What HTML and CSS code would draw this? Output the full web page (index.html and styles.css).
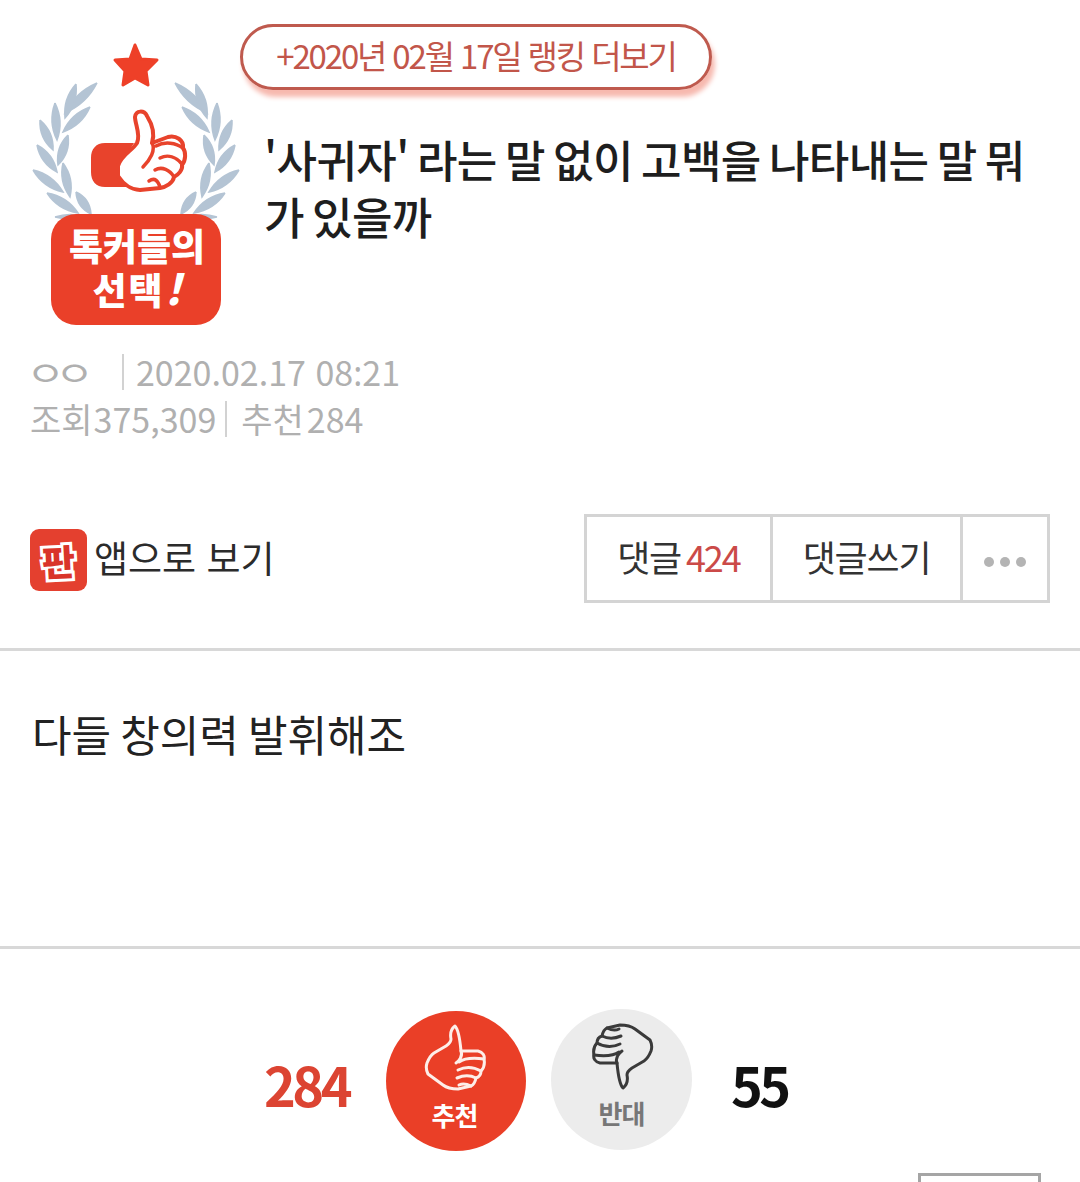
FILE: index.html
```html
<!DOCTYPE html>
<html lang="ko">
<head>
<meta charset="utf-8">
<title>사귀자</title>
<link rel="stylesheet" href="styles.css">
</head>
<body>
<main class="page">
  <header class="head">
    <svg class="emblem" viewBox="0 0 240 340" width="240" height="340" aria-hidden="true">
      <defs>
        <g id="wreath">
          <path d="M97 83Q75.5 92.2 65 113Q86.5 103.8 97 83"/>
          <path d="M76 84Q63 98.5 65 118Q78 103.5 76 84"/>
          <path d="M90 107Q71 113.7 63 132Q82 125.3 90 107"/>
          <path d="M55 103Q48 122 57 140Q64 121 55 103"/>
          <path d="M40 120Q39 138 53 150Q54 132 40 120"/>
          <path d="M68 135Q55.4 147.4 58 165Q70.6 152.6 68 135"/>
          <path d="M37 145Q40.6 163.3 57 172Q53.4 153.7 37 145"/>
          <path d="M33 170Q43.3 187.5 63 192Q52.7 174.5 33 170"/>
          <path d="M63 163Q58.7 181.6 70 197Q74.3 178.4 63 163"/>
          <path d="M47 193Q58 209.7 78 213Q67 196.3 47 193"/>
          <path d="M76 192Q76.9 207.5 91 214Q90 198.5 76 192"/>
          <path d="M55 217Q70 212 85 217Q70 221 55 217"/>
        </g>
      </defs>
      <use href="#wreath" class="leaf"/>
      <use href="#wreath" class="leaf" transform="matrix(-1 0 0 1 272 0)"/>
      <polygon class="star" points="135,45 141,59 157,60 146,71 148,85 135,78 123,85 125,71 115,60 130,59"/>
      <path class="cuff" d="M126 143H105C96 143 91 149 91 158V172C91 181 96 187 105 187H128L118 168L134 143Z"/>
      <path class="hand" d="M118 166C121 155 132 151 137 143C141 135 135 124 135 117C136 110 144 110 147 116C152 124 155 134 152 143L168 137C176 135 184 140 183 148C186 152 186 160 182 165C183 170 178 175 174 177C173 183 166 187 160 188L140 190C130 190 122 182 118 176Z"/>
      <path class="hand-line" d="M152 143C156 150 150 160 143 167M156 146C165 141 176 143 183 148M160 158C168 154 176 157 182 164M155 170C162 166 170 170 174 177M149 181C155 177 158 181 160 187"/>
      <rect class="badge" x="51" y="214" width="170" height="111" rx="25"/>
      <text class="badge-text" x="137" y="261">톡커들의</text>
      <text class="badge-text badge-second" x="138" y="305">선택<tspan class="bang">!</tspan></text>
    </svg>
    <div class="head-main">
      <a class="rank"><span class="rank-label">+2020년 02월 17일 랭킹 더보기</span></a>
      <h1 class="title">'사귀자' 라는 말 없이 고백을 나타내는 말 뭐가 있을까</h1>
    </div>
  </header>

  <section class="meta">
    <p class="meta-line"><span class="author"><span class="author-name">ㅇㅇ</span></span><i class="sep sep-a"></i><span>2020.02.17 08<span class="colon">:</span>21</span></p>
    <p class="meta-line meta-second"><span>조회</span><span class="num">375,309</span><i class="sep"></i><span>추천</span><span class="num">284</span></p>
  </section>

  <section class="actions">
    <a class="app">
      <span class="app-icon"><span class="app-glyph">판</span></span>
      <span class="app-label">앱으로 보기</span>
    </a>
    <div class="tabs">
      <a class="tab tab-reply">댓글 <b class="count">424</b></a>
      <a class="tab tab-write">댓글쓰기</a>
      <a class="tab tab-more"><i></i><i></i><i></i></a>
    </div>
  </section>

  <article class="body-text">다들 창의력 발휘해조</article>

  <section class="vote">
    <strong class="vote-num up-num">284</strong>
    <a class="circle circle-up">
      <svg class="thumb" viewBox="-2 -2 64 68" width="64" height="68" aria-hidden="true">
        <path d="M29 0C32 3 34 14 35 25L52 25C57 26 59 30 58 33C59 38 58 42 55 45C55 49 53 51 50 52C49 57 47 59 45 60L32 63C26 63 21 62 17 59L2 48C0 44 0 40 1 37C3 32 5 29 8 27L20 20C23 18 25 15 25 13C24 8 25 3 29 0Z"/>
        <path d="M35 25C37 30 33 35 30 37M33 36C40 31 50 32 58 33M32 44C40 40 48 41 55 45M31 52C38 49 44 49 50 52M33 59C37 57 41 58 45 60"/>
      </svg>
      <span class="circle-label">추천</span>
    </a>
    <a class="circle circle-down">
      <svg class="thumb thumb-down" viewBox="-2 -2 64 68" width="64" height="68" aria-hidden="true">
        <path d="M29 0C32 3 34 14 35 25L52 25C57 26 59 30 58 33C59 38 58 42 55 45C55 49 53 51 50 52C49 57 47 59 45 60L32 63C26 63 21 62 17 59L2 48C0 44 0 40 1 37C3 32 5 29 8 27L20 20C23 18 25 15 25 13C24 8 25 3 29 0Z"/>
        <path d="M35 25C37 30 33 35 30 37M33 36C40 31 50 32 58 33M32 44C40 40 48 41 55 45M31 52C38 49 44 49 50 52M33 59C37 57 41 58 45 60"/>
      </svg>
      <span class="circle-label">반대</span>
    </a>
    <strong class="vote-num down-num">55</strong>
  </section>
  <div class="peek-row"><div class="peek"></div></div>
</main>
</body>
</html>
```

FILE: styles.css
```css
* { box-sizing: border-box; }
html, body { margin: 0; padding: 0; background: #fff; }
body {
  width: 1080px;
  height: 1182px;
  overflow: hidden;
  font-family: "Noto Sans CJK KR", "Noto Sans", sans-serif;
  color: #222;
}
.page { display: flex; flex-direction: column; height: 1182px; overflow: hidden; }
a { color: inherit; text-decoration: none; }
p, h1 { margin: 0; }

.head { display: flex; height: 340px; flex: none; }
.emblem { flex: none; display: block; }
.leaf { fill: #b4c4d4; stroke: #b4c4d4; stroke-width: 1.5; }
.star { fill: #ee4028; stroke: #ee4028; stroke-width: 3; stroke-linejoin: round; }
.cuff { fill: #e8432c; }
.hand { fill: #fff; stroke: #e8432c; stroke-width: 4; stroke-linejoin: round; }
.hand-line { fill: none; stroke: #e8432c; stroke-width: 3.5; stroke-linecap: round; }
.badge { fill: #ea4029; }
.badge-text {
  fill: #fff;
  font-size: 37px;
  font-weight: 900;
  text-anchor: middle;
}
.badge-second { letter-spacing: 2px; }
.bang { font-style: italic; font-size: 42px; }

.head-main { flex: 1; display: flex; flex-direction: column; align-items: flex-start; padding-top: 24px; }
.rank {
  width: 472px;
  height: 66px;
  display: flex;
  align-items: center;
  justify-content: center;
  border: 3px solid #bf5a4e;
  border-radius: 33px;
  box-shadow: 3px 7px 5px #f7b9af;
  color: #c2564a;
  font-size: 33px;
  letter-spacing: -2.15px;
  white-space: nowrap;
}
.rank-label { margin-top: -4px; }
.title {
  margin: 41px 50px 0 24px;
  font-size: 44px;
  line-height: 57px;
  font-weight: 500;
  letter-spacing: -0.6px;
  word-spacing: -3.5px;
  color: #1e1e1e;
}

.meta {
  height: 114px;
  flex: none;
  padding: 8px 0 0 30px;
  color: #b0b0b0;
  font-size: 34px;
}
.meta-line { display: flex; align-items: center; height: 48px; line-height: 48px; white-space: nowrap; }
.meta-second { margin-top: -1px; }
.colon { font-family: "Noto Sans", sans-serif; }
.author { width: 92px; }
.author-name {
  display: inline-block;
  margin-left: -4px;
  letter-spacing: -8px;
  transform: scaleX(1.25);
  transform-origin: left center;
}
.sep { display: block; width: 2px; height: 36px; background: #d2d2d2; margin: 0 12px; }
.sep-a { margin-left: 0; }
.meta-second .sep { margin: 0 14px 0 9px; }
.num { margin-left: 1px; }
.sep + span + .num { margin-left: 3px; }

.actions {
  flex: none;
  height: 197px;
  padding: 60px 30px 0;
  display: flex;
  justify-content: space-between;
  align-items: flex-start;
  border-bottom: 3px solid #d8d8d8;
}
.app { display: flex; align-items: center; gap: 7px; margin-top: 15px; height: 62px; font-size: 37px; color: #2b2b2b; }
.app-label { margin-top: -6px; }
.app-icon {
  width: 57px;
  height: 62px;
  border-radius: 9px;
  background: #e4402f;
  display: flex;
  align-items: center;
  justify-content: center;
}
.app-glyph {
  font-size: 36px;
  font-weight: 900;
  color: #d9342a;
  -webkit-text-stroke: 6px #fff;
  paint-order: stroke fill;
  transform: rotate(-3deg);
  line-height: 1;
}
.tabs { display: flex; height: 89px; border: 3px solid #d4d4d4; }
.tab {
  display: flex;
  align-items: center;
  justify-content: center;
  padding-bottom: 6px;
  font-size: 36px;
  color: #333;
  letter-spacing: -1.2px;
  word-spacing: -4px;
  white-space: pre;
}
.tab-reply { width: 186px; border-right: 3px solid #d4d4d4; }
.tab-write { width: 190px; border-right: 3px solid #d4d4d4; }
.tab-more { width: 84px; gap: 6px; padding: 6px 0 0; }
.tab-more i { width: 10px; height: 10px; border-radius: 50%; background: #b4b4b4; }
.count { color: #cb4a48; font-weight: 400; letter-spacing: -2px; }

.body-text {
  flex: none;
  height: 298px;
  padding: 51px 0 0 32px;
  font-size: 43px;
  line-height: 62px;
  word-spacing: -3px;
  color: #222;
  border-bottom: 3px solid #d8d8d8;
}

.vote {
  flex: none;
  height: 222px;
  padding: 62px 0 0 264px;
  display: flex;
  align-items: flex-start;
}
.vote-num { font-size: 54px; line-height: 146px; font-weight: 700; letter-spacing: -3.5px; }
.up-num { color: #dc4432; width: 122px; }
.down-num { color: #111; margin-left: 39px; }
.circle {
  flex: none;
  width: 141px;
  height: 141px;
  border-radius: 50%;
  display: flex;
  flex-direction: column;
  align-items: center;
  padding-top: 13px;
}
.circle-up { background: #ea3f27; color: #fff; width: 140px; height: 140px; }
.circle-up .circle-label { margin-left: -3px; }
.circle-down { background: #ececec; color: #777; margin: -2px 0 0 25px; }
.thumb { display: block; fill: none; stroke: #fdeee9; stroke-width: 3; stroke-linejoin: round; stroke-linecap: round; }
.thumb-down { stroke: #3a3a3a; transform: rotate(180deg); }
.circle-label { font-size: 26px; line-height: 30px; font-weight: 700; margin-top: 8px; letter-spacing: -1px; }

.peek-row { position: absolute; left: 0; right: 0; top: 1173px; }
.peek { width: 123px; height: 40px; margin-left: 918px; border: 3px solid #a5a5a5; }
```
